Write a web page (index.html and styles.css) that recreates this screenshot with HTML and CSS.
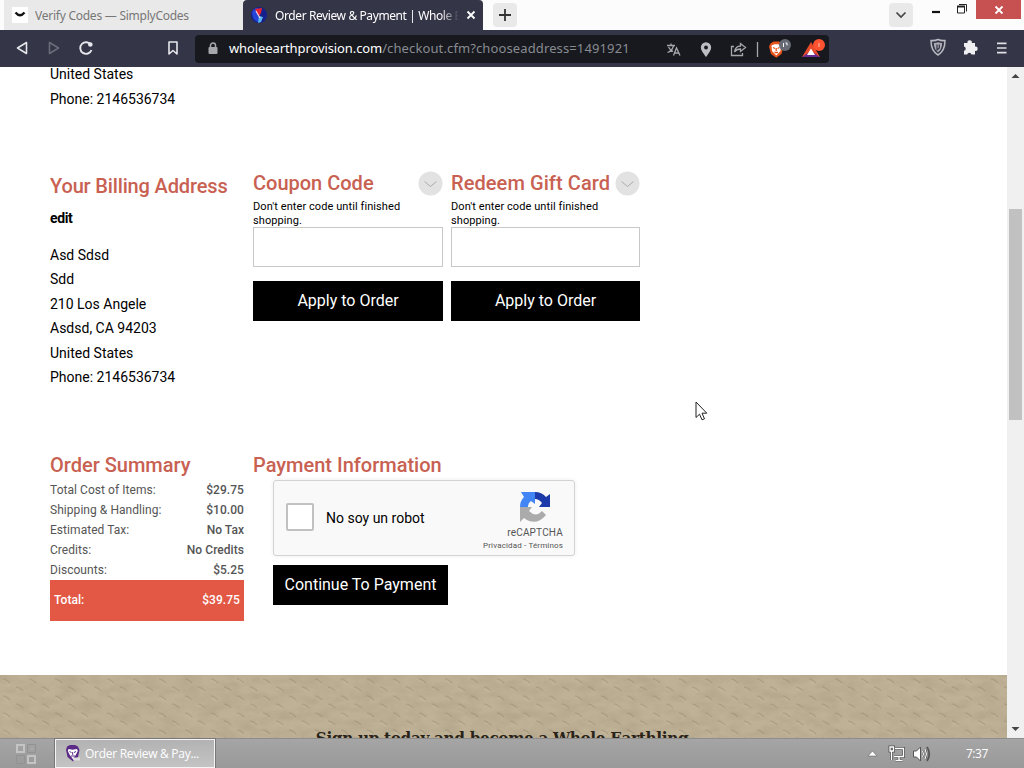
FILE: index.html
```html
<!DOCTYPE html>
<html lang="en">
  <head>
    <meta charset="utf-8">
    <title>Order Review &amp; Payment | Whole Earth Provision</title>
    <link rel="stylesheet" href="styles.css">
  </head>
  <body>
    <!-- browser tabs -->
    <div class="tab-strip">
      <div class="tab">
        <svg class="tab-icon" width="16" height="16" viewBox="0 0 16 16"><rect width="16" height="16" fill="#fff"/><path d="M3.500 5.500Q8 11 12.500 5.500" fill="none" stroke="#111" stroke-width="2.300"/></svg>
        <span class="tab-title first-title">Verify Codes — SimplyCodes</span>
      </div>
      <div class="tab active">
        <svg class="tab-icon" width="16" height="16" viewBox="0 0 16 16"><circle cx="8" cy="8" r="8" fill="#16208c"/><path d="M1 5Q3 1 7 1L6 6 9 12 7 15Q1 13 1 5" fill="#2545d8"/><path d="M4 2l7-1-1 5-2 3z" fill="#e8232f"/><path d="M8 9l4 1-2 5-3 1z" fill="#58b9f1"/><path d="M5 4l4 7" stroke="#f7d4df" stroke-width="1.200"/></svg>
        <span class="tab-title fade">Order Review &amp; Payment | Whole E</span>
        <svg class="tab-close" width="10" height="10" viewBox="0 0 10 10"><path d="M1.500 1.500l7 7M8.500 1.500l-7 7" stroke="#fff" stroke-width="1.800"/></svg>
      </div>
      <div class="tab-btn"><svg width="14" height="14" viewBox="0 0 14 14"><path d="M7 1v12M1 7h12" stroke="#333" stroke-width="1.800"/></svg></div>
      <div class="tab-btn search-tabs"><svg width="12" height="8" viewBox="0 0 12 8"><path d="M1.500 1.500L6 6l4.500-4.500" fill="none" stroke="#444" stroke-width="1.700"/></svg></div>
      <div class="window-btns">
        <svg width="60" height="19" viewBox="0 0 60 19"><path d="M4 12h8" stroke="#111" stroke-width="2.200"/><path d="M29.500 6.500h7v6.500h-7z" fill="none" stroke="#222"/><path d="M29 6.500h8" stroke="#222" stroke-width="2"/><path d="M31 4.500h7.500v7" fill="none" stroke="#222"/></svg>
        <div class="win-close"><svg width="10" height="10" viewBox="0 0 10 10"><path d="M1.500 1.500l7 7M8.500 1.500l-7 7" stroke="#fff" stroke-width="1.800"/></svg></div>
      </div>
    </div>

    <!-- address bar -->
    <div class="toolbar">
      <svg class="nav-icons" width="180" height="37" viewBox="0 0 180 37" fill="none" stroke="#e6e6ec" stroke-width="1.600" stroke-linejoin="round">
        <path d="M26.500 12.500v11L17.500 18z"/>
        <path d="M49.500 12.500v11l9-5.500z" stroke="#6b6c7a"/>
        <path d="M91 15A5.800 5.800 0 1 0 91.500 20" stroke-width="1.900"/><circle cx="90.300" cy="14.500" r="2.300" fill="#e6e6ec" stroke="none"/>
        <path d="M169 12h8v12l-4-3.500-4 3.500z"/>
      </svg>
      <div class="url-bar">
        <svg class="lock" width="10" height="13" viewBox="0 0 10 13"><rect x="0.500" y="5" width="9" height="7" rx="1" fill="#a5a7ab"/><path d="M2.500 5V3.500a2.500 2.500 0 0 1 5 0V5" fill="none" stroke="#a5a7ab" stroke-width="1.500"/></svg>
        <span class="url"><b>wholeearthprovision.com</b>/checkout.cfm?chooseaddress=1491921</span>
        <svg class="url-icons" width="168" height="28" viewBox="0 0 168 28" fill="none" stroke="#a5a7ab" stroke-width="1.300">
          <!-- translate -->
          <path d="M6 10.500h8M10 8.500v2M12.500 11Q11 16 6.500 17.500M7.500 12Q9 15 12 16.500"/>
          <path d="M12.500 20.500l3-7.500 3.500 7.500M13.500 18h4.500"/>
          <!-- location -->
          <path d="M45 21c-2-3-4.500-5.500-4.500-8.500a4.500 4.500 0 0 1 9 0c0 3-2.500 5.500-4.500 8.500z" fill="#bdbec2" stroke="#bdbec2"/><circle cx="45" cy="12.500" r="1.900" fill="#17181f" stroke="none"/>
          <!-- share -->
          <path d="M73 11.500h-2.500v9h11V18M84.500 12.500l-5-4v2.500q-5 0-6 6 2-3 6-3v2.500z"/>
          <path d="M96.500 7v15" stroke="#a5a7ab"/>
          <!-- shields -->
          <path d="M109.500 8.500l3-2h5.500l3 2 1.500 3-2 7.500-5.200 3.800-5.300-3.800-2-7.500z" fill="#e9541c" stroke="none"/>
          <path d="M110.500 10.500l3-1.200h3.500l3 1.200-.5 5.500-4.200 4.500-4.300-4.500z" fill="#fff" stroke="none"/><path d="M112 12.500l2 1M118.500 12.500l-2 1M115.200 13v3M113.500 17.500h3.500" stroke="#e9541c"/>
          <circle cx="124" cy="10" r="6" fill="#656a75" stroke="none"/>
          <path d="M122.500 8v4M124.500 8h1.500v2.500" stroke="#fff" stroke-width="1"/>
          <!-- rewards -->
          <path d="M141 22l9-15 9 15z" fill="#e84a2a" stroke="none"/><path d="M141 22h18l-9-6z" fill="#662d91" stroke="none"/><path d="M150 13.500l4 6.500h-8z" fill="#fff" stroke="none"/>
          <circle cx="158" cy="10" r="6" fill="#ff5230" stroke="none"/><path d="M158 8v4" stroke="#ffc2b4" stroke-width="1"/>
        </svg>
      </div>
      <svg class="ext-icons" width="84" height="37" viewBox="0 0 84 37">
        <path d="M8 10.500Q11.500 11 15 9.500 18.500 11 22 10.500 22 21 15 25 8 21 8 10.500z" fill="none" stroke="#b9bac2" stroke-width="1.500"/>
        <path d="M10.800 13q2 .200 4.200-.800 2.200 1 4.200.800-.200 6.500-4.200 9.200-4-2.700-4.200-9.200z" fill="#a8a9b2"/><path d="M14 14.500v5.500l2.300-2v-3.500" fill="none" stroke="#343546" stroke-width="1.200"/>
        <path d="M41 13h3.500a2.200 2.200 0 1 1 4.300 0H52v3.500a2.200 2.200 0 1 1 0 4.300V24.500h-3.500a2.200 2.200 0 0 0-4.300 0H41v-3.700a2.200 2.200 0 0 0 0-4.300z" fill="#f0f0f3"/>
        <path d="M74 13.300h9.500M74 18h9.500M74 22.700h9.500" stroke="#e0e0e6" stroke-width="1.700"/>
      </svg>
    </div>

    <div class="viewport">
      <div class="page">
        <div class="checkout">
          <div class="shipping">
            <p>United States</p>
            <p>Phone: 2146536734</p>
          </div>

          <div class="billing">
            <h2>Your Billing Address</h2>
            <a class="edit">edit</a>
            <p>Asd Sdsd</p>
            <p>Sdd</p>
            <p>210 Los Angele</p>
            <p>Asdsd, CA 94203</p>
            <p>United States</p>
            <p>Phone: 2146536734</p>
          </div>

          <div class="code-box">
            <div class="code-head">
              <h2>Coupon Code</h2>
              <svg width="25" height="25" viewBox="0 0 25 25"><circle cx="12.500" cy="12.500" r="12" fill="#e2e2e3"/><path d="M6.500 10.500l6 5 6-5" fill="none" stroke="#aaa"/></svg>
            </div>
            <div class="hint">Don't enter code until finished shopping.</div>
            <input type="text" class="code-input">
            <button class="btn apply">Apply to Order</button>
          </div>

          <div class="code-box">
            <div class="code-head">
              <h2 class="gift">Redeem Gift Card</h2>
              <svg width="25" height="25" viewBox="0 0 25 25"><circle cx="12.500" cy="12.500" r="12" fill="#e2e2e3"/><path d="M6.500 10.500l6 5 6-5" fill="none" stroke="#aaa"/></svg>
            </div>
            <div class="hint">Don't enter code until finished shopping.</div>
            <input type="text" class="code-input">
            <button class="btn apply">Apply to Order</button>
          </div>

          <div class="summary">
            <h2>Order Summary</h2>
            <div class="line"><span>Total Cost of Items:</span><b>$29.75</b></div>
            <div class="line"><span>Shipping &amp; Handling:</span><b>$10.00</b></div>
            <div class="line"><span>Estimated Tax:</span><b>No Tax</b></div>
            <div class="line"><span>Credits:</span><b>No Credits</b></div>
            <div class="line"><span>Discounts:</span><b>$5.25</b></div>
            <div class="line total"><b>Total:</b><b>$39.75</b></div>
          </div>

          <div class="payment">
            <h2>Payment Information</h2>
            <div class="captcha">
              <span class="check"></span>
              <span class="robot">No soy un robot</span>
              <div class="captcha-brand">
                <svg width="32" height="32" viewBox="0 0 32 32">
                  <path d="M16 1A15 15 0 0 1 27 6l4-3v13H20l3-4q-3-4-7-4z" fill="#1c3aa9"/>
                  <path d="M1 16Q1 10 5 6L2 1h14v12l-4-3q-3 2-3 6z" fill="#4285f4"/>
                  <path d="M1 16h12l-3 4q7 7 13 0l4 4Q17 36 5 27l-4 4z" fill="#ababab"/>
                </svg>
                <div class="captcha-name">reCAPTCHA</div>
                <div class="captcha-links">Privacidad - Términos</div>
              </div>
            </div>
            <button class="btn continue">Continue To Payment</button>
          </div>
        </div>

        <div class="signup">
          <svg class="texture" width="1007" height="63">
            <defs>
              <filter id="paper" x="0" y="0" width="100%" height="100%" color-interpolation-filters="sRGB">
                <feTurbulence type="fractalNoise" baseFrequency="0.050 0.110" numOctaves="3" seed="4"/>
                <feColorMatrix values="0 0 0 0 .33  0 0 0 0 .28  0 0 0 0 .2  .6 0 0 0 -.2"/>
              </filter>
              <pattern id="weave" width="26" height="17" patternUnits="userSpaceOnUse">
                <path d="M3 4q3 0 7 4M16 12q3 0 7 4" fill="none" stroke="#a39679" stroke-width="1.600"/>
                <path d="M3 6q3 0 6 4M16 14q3 0 6 3" fill="none" stroke="#c7bb9f" stroke-width="1.200"/>
              </pattern>
            </defs>
            <rect width="1007" height="63" fill="#beb196"/>
            <rect width="1007" height="63" fill="url(#weave)" opacity=".55"/>
            <rect width="1007" height="63" filter="url(#paper)" opacity=".3"/>
          </svg>
          <h3>Sign up today and become a Whole Earthling</h3>
        </div>
      </div>
      <div class="scrollbar">
        <svg width="17" height="17" viewBox="0 0 17 17"><path d="M4.500 11l4-4 4 4z" fill="#444"/></svg>
        <div class="thumb"></div>
        <svg width="17" height="17" viewBox="0 0 17 17"><path d="M4.500 6l4 4 4-4z" fill="#444"/></svg>
      </div>
    </div>

    <!-- windows taskbar -->
    <div class="taskbar">
      <svg class="start" width="22" height="22" viewBox="0 0 22 22" fill="none" stroke="#c4c4c4" stroke-width="2"><path d="M2 2h7v7H2zM13 13h7v7h-7z"/><path d="M12.500 1.500h8v8h-8zM1.500 12.500h8v8h-8z" stroke="#929292" stroke-width="1"/><path d="M15 7l2-3 2 3z" fill="#aaa" stroke="none"/></svg>
      <div class="task">
        <svg width="16" height="17" viewBox="0 0 16 17"><path d="M2 1.500L5 0h5l3 1.500L14.500 5 13 12l-5 4.500L2.500 12 1 5z" fill="#5b2a86"/><path d="M3.500 4l4 .8L12 4l.8 2-2 4-3 4-3-4-2-4z" fill="#fff"/><path d="M4.500 6.500l2 1M11 6.500l-2 1M7.700 7v3M6 11h4" stroke="#5b2a86"/><path d="M8 14h7" stroke="#ddd" stroke-width="3"/></svg>
        <span>Order Review &amp; Pay...</span>
      </div>
      <svg class="tray" width="64" height="20" viewBox="0 0 64 20">
        <path d="M0 12l4.500-5L9 12z" fill="#fff" stroke="#666" stroke-width=".6"/>
        <g fill="none" stroke="#555" stroke-width="3"><path d="M27 4.500h8.500v8H26"/><path d="M31 13v3M27.500 16.500h7M23.500 7v9"/><path d="M22 3h3.500v4H22z"/></g>
        <g fill="none" stroke="#fff" stroke-width="1.300"><path d="M27 4.500h8.500v8H26"/><path d="M31 13v3M27.500 16.500h7M23.500 7v9"/><path d="M22 3h3.500v4H22z"/></g>
        <path d="M45.500 7h3l4-4v14l-4-4h-3z" fill="#fff" stroke="#555"/>
        <path d="M54.500 7q2 3 0 6M57 5q3 5 0 10M59 3q4.500 7 0 14" fill="none" stroke="#555" stroke-width="1.800"/>
        <path d="M54.500 7q2 3 0 6M57 5q3 5 0 10" fill="none" stroke="#fff"/>
      </svg>
      <span class="clock">7:37</span>
    </div>

    <svg class="cursor" width="13" height="20" viewBox="0 0 13 20"><path d="M1 1v15.500l3.500-3.300 2.500 5.600 2.500-1-2.500-5.600h4.800z" fill="#fff" stroke="#222"/></svg>
  </body>
</html>
```
FILE: styles.css
```css
*{
  margin: 0;
  padding: 0;
  box-sizing: border-box;
}

body{
  width: 1024px;
  height: 768px;
  overflow: hidden;
  display: flex;
  flex-direction: column;
  background-color: #fff;
  font-family: Roboto, sans-serif;
  font-size: 14px;
  color: #000;
}

svg{
  display: block;
  flex: none;
}

/* tabs */
.tab-strip{
  display: flex;
  height: 30px;
  background-color: #fcfcfc;
  font-family: "Noto Sans", "Open Sans", sans-serif;
  font-size: 12px;
}

.tab{
  display: flex;
  align-items: center;
  width: 239px;
  margin-left: 4px;
  padding-left: 8px;
  background-color: #e9e9e9;
  color: #777;
}

.tab.active{
  width: 240px;
  margin-left: 0;
  background-color: #343546;
  border-radius: 4px 4px 0 0;
  color: #fff;
}

.tab-title{
  width: 184px;
  margin-left: 8px;
  overflow: hidden;
  white-space: nowrap;
  letter-spacing: -0.4px;
}

.first-title{
  margin-left: 7px;
  letter-spacing: -0.250px;
}

.fade{
  -webkit-mask-image: linear-gradient(90deg, #000 90%, transparent);
  mask-image: linear-gradient(90deg, #000 90%, transparent);
}

.tab-close{
  margin-left: 7px;
}

.tab-btn{
  display: flex;
  align-items: center;
  justify-content: center;
  width: 24px;
  height: 24px;
  margin: 3px 0 0 10px;
  border-radius: 4px;
  background-color: #e9e9e9;
}

.search-tabs{
  margin-left: auto;
}

.window-btns{
  display: flex;
  margin-left: 15px;
}

.win-close{
  display: flex;
  align-items: center;
  justify-content: center;
  width: 45px;
  height: 19px;
  margin: 0 3px 0 -12px;
  background-color: #c75050;
}

/* toolbar */
.toolbar{
  display: flex;
  align-items: center;
  height: 37px;
  background-color: #343546;
}

.url-bar{
  display: flex;
  align-items: center;
  width: 634px;
  height: 28px;
  margin-left: 15px;
  padding-left: 13px;
  border-radius: 4px;
  background-color: #17191f;
}

.url{
  flex: 1;
  margin-left: 11px;
  padding-bottom: 2px;
  white-space: nowrap;
  font-family: "Noto Sans", "Open Sans", sans-serif;
  font-size: 13px;
  color: #898b90;
  letter-spacing: 0.120px;
}

.url b{
  font-weight: normal;
  color: #fff;
  letter-spacing: -0.1px;
}

.ext-icons{
  margin-left: 94px;
}

/* page */
.viewport{
  display: flex;
  height: 671px;
}

.page{
  width: 1007px;
  overflow: hidden;
}

.checkout{
  display: grid;
  grid-template-columns: 195px 190px 189px;
  grid-template-rows: 103px 282px 223px;
  column-gap: 8px;
  height: 608px;
  padding-left: 50px;
}

.shipping{
  grid-column: 1 / 4;
  margin-top: -5px;
}

p{
  line-height: 24.450px;
}

.shipping p{
  line-height: 25px;
}

h2{
  font-size: 20px;
  font-weight: 500;
  line-height: 24px;
  color: #c86152;
  white-space: nowrap;
}

.billing{
  padding-top: 4px;
}

.billing h2{
  letter-spacing: -0.150px;
}

.gift{
  letter-spacing: 0.080px;
}

.edit{
  display: block;
  margin: 9px 0 14px;
  line-height: 22px;
  font-weight: bold;
  letter-spacing: -0.4px;
}

.code-head{
  display: flex;
  justify-content: space-between;
  height: 30px;
  padding-top: 1px;
}

.hint{
  width: 160px;
  height: 27px;
  font-size: 11px;
  line-height: 14px;
  letter-spacing: 0.080px;
}

.code-input{
  display: block;
  width: 100%;
  height: 40px;
  border: 1px solid #c8c8c8;
}

.btn{
  display: block;
  height: 40px;
  padding-bottom: 2px;
  border: none;
  background-color: #000;
  color: #fff;
  font-family: Roboto, sans-serif;
  font-size: 16px;
}

.apply{
  width: 100%;
  margin-top: 14px;
}

/* order summary */
.summary{
  width: 194px;
}

.line{
  display: flex;
  justify-content: space-between;
  height: 20px;
  line-height: 20px;
  font-size: 12px;
  color: #555;
  letter-spacing: 0.050px;
}

.line b{
  font-weight: 500;
}

.summary h2, .payment h2{
  padding-top: 1px;
  height: 28px;
}

.line.total{
  height: 41px;
  padding: 0 4px;
  line-height: 41px;
  background-color: #e25845;
  color: #fff;
}

.payment{
  grid-column: 2 / 4;
}

.captcha{
  display: flex;
  align-items: center;
  width: 302px;
  height: 76px;
  margin-left: 20px;
  padding: 0 11px 0 12px;
  border: 1px solid #d3d3d3;
  border-radius: 3px;
  background-color: #f9f9f9;
  box-shadow: 0 0 4px rgba(0, 0, 0, 0.08);
}

.check{
  width: 28px;
  height: 28px;
  margin-bottom: 2px;
  border: 2px solid #c1c1c1;
  border-radius: 2px;
  background-color: #fff;
}

.robot{
  margin-left: 12px;
}

.captcha-brand{
  margin-left: auto;
  padding-top: 5px;
  color: #555;
  text-align: right;
}

.captcha-brand svg{
  margin: 0 12px 0 auto;
}

.captcha-name{
  margin-top: 3px;
  font-size: 10px;
  line-height: 14px;
  letter-spacing: 0.2px;
}

.captcha-links{
  font-size: 8px;
  line-height: 11px;
  letter-spacing: 0.150px;
}

.continue{
  width: 175px;
  margin: 9px 0 0 20px;
}

/* newsletter */
.signup{
  position: relative;
  height: 63px;
  overflow: hidden;
}

.signup h3{
  position: absolute;
  top: 51px;
  width: 1004px;
  text-align: center;
  font-family: "DejaVu Serif Condensed", "DejaVu Serif", serif;
  font-size: 17px;
  font-weight: bold;
  font-stretch: condensed;
  line-height: 24px;
  letter-spacing: -0.350px;
  color: #29231a;
}

.scrollbar{
  display: flex;
  flex-direction: column;
  justify-content: space-between;
  width: 17px;
  background-color: #f0f0f0;
}

.thumb{
  height: 211px;
  margin: 125px 2px auto;
  background-color: #c1c1c1;
}

/* taskbar */
.taskbar{
  display: flex;
  align-items: center;
  height: 30px;
  border-top: 1px solid #8d8d8d;
  background: linear-gradient(#a5a5a5, #999);
  font-family: "Open Sans", sans-serif;
  font-size: 12px;
  color: #fff;
}

.start{
  margin-left: 15px;
}

.task{
  display: flex;
  align-items: center;
  width: 160px;
  height: 29px;
  margin-left: 18px;
  padding-left: 9px;
  border: 1px solid #f5f5f5;
  outline: 1px solid #777;
  background: linear-gradient(#b2b2b2, #c4c4c4);
}

.task span{
  margin-left: 4px;
  padding-bottom: 1px;
  white-space: nowrap;
  letter-spacing: -0.280px;
}

.tray{
  margin-left: 653px;
}

.clock{
  margin-left: 34px;
  letter-spacing: -0.5px;
}

.cursor{
  position: absolute;
  left: 695px;
  top: 401px;
}
```
